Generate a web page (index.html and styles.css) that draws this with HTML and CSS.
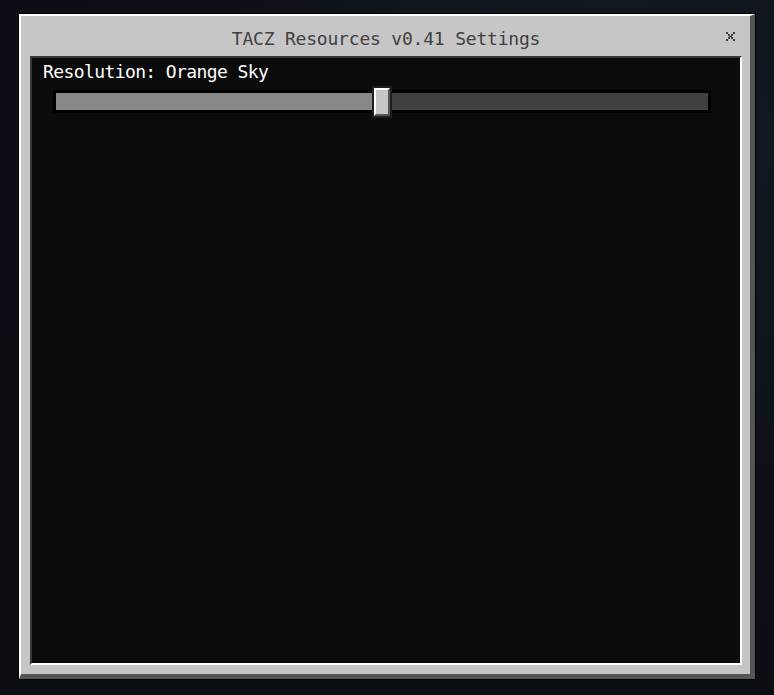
FILE: index.html
```html
<!DOCTYPE html>
<html>
<head>
<meta charset="utf-8">
<link rel="stylesheet" href="styles.css">
</head>
<body>
<div class="window">
  <div class="bevel">
    <div class="titlebar">
      <span class="title">TACZ Resources v0.41 Settings</span>
      <svg class="close" width="9" height="9" viewBox="0 0 9 9" shape-rendering="crispEdges">
        <path fill="#404040" d="M0 0h2v2H0zM7 0h2v2H7zM2 2h2v2H2zM5 2h2v2H5zM3 4h3v1H3zM2 5h2v2H2zM5 5h2v2H5zM0 7h2v2H0zM7 7h2v2H7z"/>
      </svg>
    </div>
    <div class="panel">
      <div class="label">Resolution: Orange Sky</div>
      <div class="slider">
        <div class="track">
          <div class="fill" style="width: 326px"></div>
          <div class="knob" style="left: 318px"></div>
        </div>
      </div>
    </div>
  </div>
</div>
</body>
</html>
```
FILE: styles.css
```css
html, body {
  margin: 0;
  height: 100%;
}
body {
  background: radial-gradient(ellipse at 80% 20%, #161b24 0%, #0d1117 45%, #0a0d12 100%);
  padding: 13px 0 0 18px;
  box-sizing: border-box;
  overflow: hidden;
  font-family: "DejaVu Sans Mono", monospace;
}
.window {
  width: 738px;
  height: 667px;
  box-sizing: border-box;
  border: 1px solid #000;
}
.bevel {
  height: 100%;
  box-sizing: border-box;
  border-top: 2px solid #fff;
  border-left: 2px solid #fff;
  border-right: 5px solid #555;
  border-bottom: 5px solid #555;
  background: #c6c6c6;
  display: flex;
  flex-direction: column;
  padding: 0 8px 9px 9px;
}
.titlebar {
  height: 40px;
  flex: none;
  display: flex;
  align-items: center;
  justify-content: center;
  position: relative;
}
.title {
  color: #404040;
  font-size: 18px;
  letter-spacing: -0.2px;
  padding-top: 4px;
}
.close {
  position: absolute;
  right: 7px;
  top: 16px;
}
.panel {
  flex: 1;
  box-sizing: border-box;
  border-top: 2px solid #373737;
  border-left: 2px solid #373737;
  border-right: 2px solid #fff;
  border-bottom: 2px solid #fff;
  background: #0b0b0b;
  padding: 3px 0 0 11px;
}
.label {
  color: #fff;
  font-size: 18px;
  line-height: 22px;
  letter-spacing: -0.6px;
}
.slider {
  padding: 7px 0 0 10px;
}
.track {
  position: relative;
  width: 652px;
  height: 17px;
  background: #404040;
  border: 3px solid #000;
}
.fill {
  height: 100%;
  background: #878787;
}
.knob {
  position: absolute;
  top: -5px;
  width: 12px;
  height: 24px;
  background: #c6c6c6;
  border-top: 2px solid #fff;
  border-left: 2px solid #fff;
  border-right: 2px solid #555;
  border-bottom: 2px solid #555;
  outline: 2px solid #1e1e1e;
}
```
